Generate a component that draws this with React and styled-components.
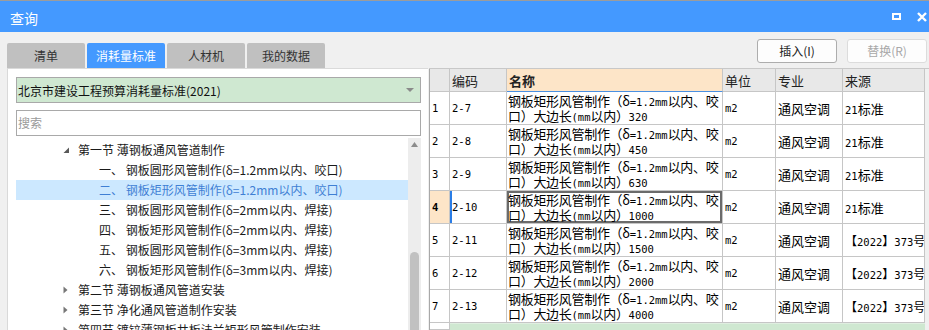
import React from 'react';
import styled, { createGlobalStyle } from 'styled-components';

const GlobalStyle = createGlobalStyle`
    html, body {
        margin: 0;
        padding: 0;
    }
    body {
        width: 929px;
        height: 330px;
        overflow: hidden;
        background: #f0f0f0;
        font-family: "Noto Sans CJK SC", "Liberation Sans", sans-serif;
        font-size: 12px;
        color: #222;
    }
`;

const Window = styled.div`
    display: flex;
    flex-direction: column;
    width: 929px;
    height: 330px;
    overflow: hidden;
`;

const TitleBar = styled.div`
    height: 31px;
    border-top: 1px solid #9c9c9c;
    background: #4499ff;
    color: #fff;
    font-size: 14px;
    display: flex;
    align-items: center;
    justify-content: space-between;
    padding: 0 2px 0 10px;
    > span {
        padding-top: 2px;
    }
`;

const WinButtons = styled.div`
    display: flex;
    align-items: center;
    gap: 16px;
    svg {
        display: block;
    }
`;

const Toolbar = styled.div`
    height: 36px;
    display: flex;
    justify-content: space-between;
    padding: 0 2px 0 7px;
`;

const Tabs = styled.div`
    display: flex;
    align-self: flex-end;
    gap: 2px;
`;

const Tab = styled.div`
    width: 78px;
    height: 25px;
    line-height: 25px;
    text-align: center;
    border-radius: 2px 2px 0 0;
    background: ${(p) => (p.$active ? '#4499ff' : '#c0c0c0')};
    color: ${(p) => (p.$active ? '#fff' : '#333')};
`;

const Actions = styled.div`
    display: flex;
    gap: 10px;
    margin-top: 7px;
`;

const Button = styled.div`
    width: 80px;
    height: 24px;
    box-sizing: border-box;
    line-height: 22px;
    text-align: center;
    border-radius: 3px;
    background: #fdfdfd;
    border: 1px solid ${(p) => (p.$disabled ? '#dcdcdc' : '#adadad')};
    color: ${(p) => (p.$disabled ? '#a8a8a8' : '#222')};
`;

const Main = styled.div`
    flex: 1;
    display: flex;
    min-height: 0;
    padding-left: 7px;
`;

const LeftPanel = styled.div`
    width: 421px;
    flex: none;
    box-sizing: border-box;
    background: #fff;
    border-left: 1px solid #d9d9d9;
    border-top: 1px solid #dadada;
    padding: 8px 7px 0 8px;
    display: flex;
    flex-direction: column;
`;

const Select = styled.div`
    height: 26px;
    box-sizing: border-box;
    border: 1px solid #a9a9a9;
    background: #cfe8d1;
    color: #111;
    display: flex;
    align-items: center;
    justify-content: space-between;
    padding: 0 6px 0 1px;
    margin-bottom: 7px;
`;

const Caret = styled.span`
    width: 0;
    height: 0;
    border-left: 4px solid transparent;
    border-right: 4px solid transparent;
    border-top: 4px solid #8a8a8a;
`;

const Search = styled.div`
    height: 26px;
    box-sizing: border-box;
    border: 1px solid #a9a9a9;
    color: #9a9a9a;
    line-height: 24px;
    padding-left: 1px;
    margin-bottom: 2px;
`;

const Tree = styled.div`
    flex: 1;
    display: flex;
    min-height: 0;
    overflow: hidden;
`;

const TreeList = styled.div`
    flex: 1;
    padding-top: 2px;
`;

const TreeRow = styled.div`
    height: 20px;
    line-height: 20px;
    display: flex;
    align-items: center;
    white-space: nowrap;
    padding-left: ${(p) => (p.$level === 1 ? 47 : 83)}px;
    background: ${(p) => (p.$selected ? '#cce8ff' : 'transparent')};
    color: ${(p) => (p.$selected ? '#3f7fd4' : '#1a1a1a')};
`;

const Toggle = styled.span`
    width: 15px;
    flex: none;
    display: flex;
    align-items: center;
    svg {
        display: block;
    }
`;

const ScrollTrack = styled.div`
    width: 13px;
    flex: none;
    background: #ededed;
    display: flex;
    flex-direction: column;
    align-items: center;
    padding-top: 4px;
`;

const ScrollThumb = styled.div`
    width: 9px;
    flex: 1;
    margin-top: 105px;
    border-radius: 5px 5px 0 0;
    background: #c1c1c1;
`;

const RightPanel = styled.div`
    flex: 1;
    margin-left: 1px;
    border-top: 1px solid #c8c8c8;
    overflow: hidden;
`;

const Grid = styled.div`
    display: grid;
    grid-template-columns: 20px 57px 216px 53px 67px 82px;
    grid-template-rows: 23px repeat(7, 33px) 1fr;
    width: 496px;
    height: 100%;
    box-sizing: border-box;
    border-left: 1px solid #a8a8a8;
    background: #fff;
    font-size: 13px;
    color: #000;
`;

const Cell = styled.div`
    box-sizing: border-box;
    border-right: 1px solid #c6c6c6;
    border-bottom: 1px solid ${(p) => p.$under || '#c6c6c6'};
    background: ${(p) => p.$bg || '#fff'};
    font-weight: ${(p) => (p.$bold ? 700 : 400)};
    font-size: ${(p) => (p.$small ? '12px' : 'inherit')};
    padding: ${(p) => (p.$top ? '2px 0 0 1px' : '0 0 0 2px')};
    line-height: ${(p) => (p.$top ? '14px' : 'normal')};
    letter-spacing: ${(p) => (p.$top ? '-0.3px' : 'normal')};
    display: flex;
    flex-direction: column;
    justify-content: ${(p) => (p.$top ? 'flex-start' : 'center')};
    white-space: nowrap;
    overflow: hidden;
    box-shadow: ${(p) => p.$ring || 'none'};
`;

const HeadCell = styled(Cell)`
    background: ${(p) => p.$bg || '#e8e8e8'};
    color: #222;
`;

const Band = styled.div`
    grid-column: 2 / span 5;
    background: #cfe8d1;
    border-top: 1px solid #dfeee0;
`;

const Latin = styled.span`
    font-family: "DejaVu Sans Mono", "Liberation Mono", monospace;
    font-size: 10.5px;
    letter-spacing: 0;
`;

const mono = (text) =>
    text
        .split(/([\x21-\x7e]+)/)
        .filter(Boolean)
        .map((s, i) => (/^[\x21-\x7e]+$/.test(s) ? <Latin key={i}>{s}</Latin> : s));

const treeRows = [
    { level: 1, open: true, label: '第一节 薄钢板通风管道制作' },
    { level: 2, label: '一、 钢板圆形风管制作(δ=1.2mm以内、咬口)' },
    { level: 2, label: '二、 钢板矩形风管制作(δ=1.2mm以内、咬口)', selected: true },
    { level: 2, label: '三、 钢板圆形风管制作(δ=2mm以内、焊接)' },
    { level: 2, label: '四、 钢板矩形风管制作(δ=2mm以内、焊接)' },
    { level: 2, label: '五、 钢板圆形风管制作(δ=3mm以内、焊接)' },
    { level: 2, label: '六、 钢板矩形风管制作(δ=3mm以内、焊接)' },
    { level: 1, open: false, label: '第二节 薄钢板通风管道安装' },
    { level: 1, open: false, label: '第三节 净化通风管道制作安装' },
    { level: 1, open: false, label: '第四节 镀锌薄钢板共板法兰矩形风管制作安装' },
];

const items = [
    { code: '2-7', size: '320', src: '21标准' },
    { code: '2-8', size: '450', src: '21标准' },
    { code: '2-9', size: '630', src: '21标准' },
    { code: '2-10', size: '1000', src: '21标准' },
    { code: '2-11', size: '1500', src: '【2022】373号' },
    { code: '2-12', size: '2000', src: '【2022】373号' },
    { code: '2-13', size: '4000', src: '【2022】373号' },
];

const ACTIVE = 3;

function TreeToggle({ open }) {
    if (open) {
        return (
            <svg width="7" height="7" viewBox="0 0 7 7">
                <path d="M6 0.5 L6 6 L0.5 6 Z" fill="#595959" />
            </svg>
        );
    }
    return (
        <svg width="5" height="8" viewBox="0 0 5 8">
            <path d="M0.5 0.5 L4.5 4 L0.5 7.5 Z" fill="#777" />
        </svg>
    );
}

export default function App() {
    return (
        <Window>
            <GlobalStyle />
            <TitleBar>
                <span>查询</span>
                <WinButtons>
                    <svg width="9" height="7" viewBox="0 0 9 7">
                        <rect x="1" y="1" width="7" height="5" fill="none" stroke="#fff" strokeWidth="2" />
                    </svg>
                    <svg width="10" height="10" viewBox="0 0 10 10">
                        <path d="M1 1 L9 9 M9 1 L1 9" stroke="#fff" strokeWidth="2.4" />
                    </svg>
                </WinButtons>
            </TitleBar>

            <Toolbar>
                <Tabs>
                    <Tab>清单</Tab>
                    <Tab $active>消耗量标准</Tab>
                    <Tab>人材机</Tab>
                    <Tab>我的数据</Tab>
                </Tabs>
                <Actions>
                    <Button>插入(I)</Button>
                    <Button $disabled>替换(R)</Button>
                </Actions>
            </Toolbar>

            <Main>
                <LeftPanel>
                    <Select>
                        <span>北京市建设工程预算消耗量标准(2021)</span>
                        <Caret />
                    </Select>
                    <Search>搜索</Search>
                    <Tree>
                        <TreeList>
                            {treeRows.map((r) => (
                                <TreeRow key={r.label} $level={r.level} $selected={r.selected}>
                                    {r.level === 1 && (
                                        <Toggle>
                                            <TreeToggle open={r.open} />
                                        </Toggle>
                                    )}
                                    {r.label}
                                </TreeRow>
                            ))}
                        </TreeList>
                        <ScrollTrack>
                            <svg width="7" height="5" viewBox="0 0 7 5">
                                <path d="M3.5 0 L7 5 L0 5 Z" fill="#8c8c8c" />
                            </svg>
                            <ScrollThumb />
                        </ScrollTrack>
                    </Tree>
                </LeftPanel>

                <RightPanel>
                    <Grid>
                        <HeadCell />
                        <HeadCell>编码</HeadCell>
                        <HeadCell $bg="#fde5c8" $bold $under="#4a90e2">
                            名称
                        </HeadCell>
                        <HeadCell>单位</HeadCell>
                        <HeadCell>专业</HeadCell>
                        <HeadCell>来源</HeadCell>

                        {items.map((it, i) => {
                            const active = i === ACTIVE;
                            return (
                                <React.Fragment key={it.code}>
                                    <Cell $bg={active ? '#fde5c8' : '#fff'} $bold={active}>
                                        <Latin>{i + 1}</Latin>
                                    </Cell>
                                    <Cell $ring={active ? 'inset 2px 0 0 #2a7de6' : null}>
                                        <Latin>{it.code}</Latin>
                                    </Cell>
                                    <Cell $top $ring={active ? 'inset 0 0 0 2px #6b6b6b' : null}>
                                        <div>{mono('钢板矩形风管制作（δ=1.2mm以内、咬')}</div>
                                        <div>{mono(`口）大边长(mm以内）${it.size}`)}</div>
                                    </Cell>
                                    <Cell>
                                        <Latin>m2</Latin>
                                    </Cell>
                                    <Cell>通风空调</Cell>
                                    <Cell $small={it.src.length > 6}>
                                        <div>{mono(it.src)}</div>
                                    </Cell>
                                </React.Fragment>
                            );
                        })}

                        <Cell />
                        <Band />
                    </Grid>
                </RightPanel>
            </Main>
        </Window>
    );
}
